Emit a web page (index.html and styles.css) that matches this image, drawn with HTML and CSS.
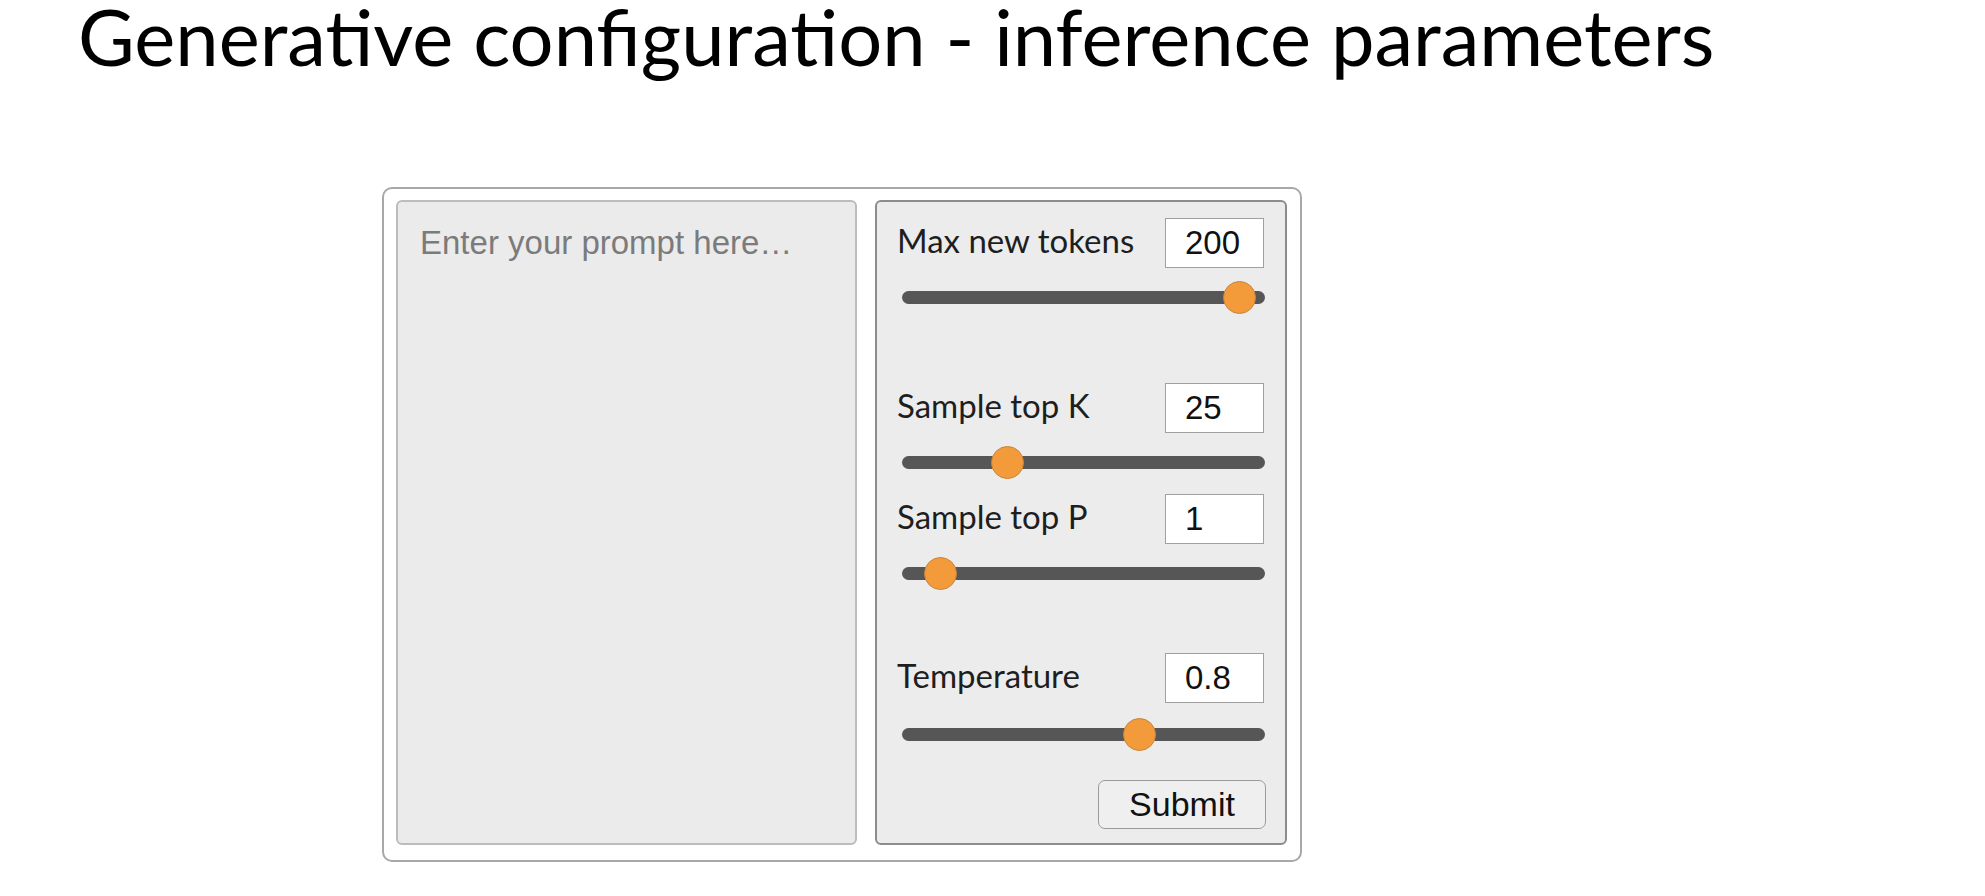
FILE: index.html
```html
<!DOCTYPE html>
<html lang="en">
<head>
<meta charset="utf-8">
<title>Generative configuration - inference parameters</title>
<link rel="stylesheet" href="styles.css">
</head>
<body>
<main class="page">
  <h1 class="title">Generative configuration - inference parameters</h1>
  <section class="card">
    <textarea class="prompt" placeholder="Enter your prompt here…"></textarea>
    <form class="controls">
      <div class="param">
        <div class="param-row">
          <label class="param-label" for="tokens">Max new tokens</label>
          <input class="param-value" id="tokens" type="text" value="200">
        </div>
        <input class="slider" type="range" min="0" max="1000" value="973" aria-label="Max new tokens">
      </div>
      <div class="param param--wide">
        <div class="param-row">
          <label class="param-label" for="topk">Sample top K</label>
          <input class="param-value" id="topk" type="text" value="25">
        </div>
        <input class="slider" type="range" min="0" max="1000" value="269" aria-label="Sample top K">
      </div>
      <div class="param param--tight">
        <div class="param-row">
          <label class="param-label" for="topp">Sample top P</label>
          <input class="param-value" id="topp" type="text" value="1">
        </div>
        <input class="slider" type="range" min="0" max="1000" value="66" aria-label="Sample top P">
      </div>
      <div class="param param--last">
        <div class="param-row">
          <label class="param-label" for="temp">Temperature</label>
          <input class="param-value" id="temp" type="text" value="0.8">
        </div>
        <input class="slider" type="range" min="0" max="1000" value="671" aria-label="Temperature">
      </div>
      <div class="actions">
        <button class="submit" type="button">Submit</button>
      </div>
    </form>
  </section>
</main>
</body>
</html>
```
FILE: styles.css
```css
html, body {
  margin: 0;
  padding: 0;
  background: #ffffff;
}

.page {
  padding: 0;
  width: 1985px;
  height: 896px;
  box-sizing: border-box;
  overflow: hidden;
}

.title {
  margin: 0 0 0 78px;
  padding-top: 0;
  font-family: Lato, "Liberation Sans", sans-serif;
  font-weight: 400;
  font-size: 77.7px;
  line-height: 73px;
  color: #000;
  letter-spacing: 0;
}

.card {
  margin: 114px 0 0 382px;
  width: 920px;
  height: 675px;
  box-sizing: border-box;
  border: 2px solid #a8a8a8;
  border-radius: 10px;
  padding: 11px 13px 15px 12px;
  display: grid;
  grid-template-columns: 461px 412px;
  column-gap: 18px;
  background: #fff;
}

.prompt {
  display: block;
  margin: 0;
  width: 100%;
  height: 100%;
  box-sizing: border-box;
  resize: none;
  border: 2px solid #bcbcbc;
  border-radius: 6px;
  background: #ebebeb;
  padding: 22px 22px;
  font-family: "Liberation Sans", Arial, sans-serif;
  font-size: 33px;
  color: #333;
  outline: none;
}

.prompt::placeholder {
  color: #7b7b7b;
  opacity: 1;
}

.controls {
  margin: 0;
  box-sizing: border-box;
  border: 2px solid #8c8c8c;
  border-radius: 6px;
  background: #ececec;
  padding: 16px 21px 0 20px;
  display: flex;
  flex-direction: column;
}

.param--wide {
  margin-top: 70px;
}

.param--tight {
  margin-top: 16px;
}

.param--last {
  margin-top: 64px;
}

.param-row {
  display: flex;
  align-items: center;
  justify-content: space-between;
}

.param-label {
  font-family: Lato, "Liberation Sans", sans-serif;
  font-size: 33px;
  color: #1e1e1e;
  padding-bottom: 6px;
}

.param-value {
  width: 99px;
  height: 50px;
  box-sizing: border-box;
  margin: 0;
  border: 1px solid #a0a0a0;
  background: #fff;
  padding: 0 0 0 19px;
  font-family: "Liberation Sans", Arial, sans-serif;
  font-size: 33px;
  color: #111;
  outline: none;
}

.slider {
  -webkit-appearance: none;
  appearance: none;
  display: block;
  margin: 13px -1px 0 5px;
  width: 363px;
  height: 32px;
  background: transparent;
  padding: 0;
}

.param--last .slider {
  margin-top: 15px;
}

.slider::-webkit-slider-runnable-track {
  height: 13px;
  border-radius: 7px;
  background: #565656;
}

.slider::-webkit-slider-thumb {
  -webkit-appearance: none;
  appearance: none;
  width: 33px;
  height: 33px;
  box-sizing: border-box;
  border-radius: 50%;
  background: #f39b3a;
  border: 1px solid #c9843a;
  margin-top: -10px;
}

.actions {
  margin-top: 30px;
  display: flex;
  justify-content: flex-end;
  margin-right: -2px;
}

.submit {
  width: 168px;
  height: 49px;
  box-sizing: border-box;
  border: 1px solid #9a9a9a;
  border-radius: 7px;
  background: #efefef;
  font-family: "Liberation Sans", Arial, sans-serif;
  font-size: 34px;
  color: #111;
  padding: 0;
}
```
